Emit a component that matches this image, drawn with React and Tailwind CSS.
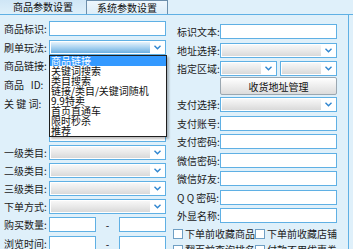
import React from "react";

const font = { fontFamily: '"Noto Sans CJK SC", "Noto Sans", sans-serif' };

function Chevron() {
  return (
    <svg width="7" height="5" viewBox="0 0 7 5" className="block">
      <path d="M0.5 0.8 L3.5 3.8 L6.5 0.8" fill="none" stroke="#2f86d0" strokeWidth="1.4" />
    </svg>
  );
}

function Input({ className = "" }) {
  return <div className={"h-[15px] border border-[#5fb0e4] bg-white " + className} />;
}

function Select({ className = "", active = false }) {
  return (
    <div className={"flex h-[15px] border border-[#5fb0e4] bg-white p-[1px] " + className}>
      <div
        className={
          "flex-1 " +
          (active
            ? "bg-gradient-to-b from-[#e6f3fc] via-[#a9d2f0] to-[#6cb0e2]"
            : "bg-gradient-to-b from-[#f7f7f7] via-[#e9e9e9] to-[#d9d9d9]")
        }
      />
      <div className="flex w-[14px] flex-none items-center justify-center">
        <Chevron />
      </div>
    </div>
  );
}

function Row({ label, mt, w = "w-[45px]", children }) {
  return (
    <div className={"flex items-center " + mt}>
      <span className={"flex-none whitespace-pre text-[10px] leading-[15px] text-[#1a1a1a] " + w}>{label}</span>
      {children}
    </div>
  );
}

function Check({ label }) {
  return (
    <div className="flex w-[88px] items-center">
      <div className="h-[10px] w-[10px] flex-none border border-[#6f9fc4] bg-white" />
      <span className="ml-[2px] whitespace-nowrap text-[10px] leading-[12px] text-[#1a1a1a]">{label}</span>
    </div>
  );
}

const options = ["商品链接", "关键词搜索", "类目搜索", "链接/类目/关键词随机", "9.9特卖", "首页直通车", "限时秒杀", "推荐"];

export default function App() {
  return (
    <div className="relative h-[249px] w-[353px] overflow-hidden bg-[#dff0fa]" style={font}>
      {/* Tabs */}
      <div className="flex h-[14px]">
        <div className="flex w-[86px] items-center justify-center bg-gradient-to-b from-[#cfe6f6] to-[#def0fa] text-[10px] leading-[14px] text-[#111]">
          商品参数设置
        </div>
        <div className="flex w-[82px] items-center justify-center border-x border-t border-[#6d8fab] bg-gradient-to-b from-[#eef7fd] to-[#dcedf8] text-[10px] leading-[13px] text-[#111]">
          系统参数设置
        </div>
        <div className="flex-1" />
      </div>

      {/* Panel */}
      <div className="flex h-[235px] border-t border-[#5fb0e4]">
        <div className="h-full w-[349px] flex-none border-r border-[#5fb0e4]">
          <div className="flex">
            {/* Left column */}
            <div className="ml-[4px] flex w-[162px] flex-col pt-[6px]">
              <Row label="商品标识:" mt="mt-0"><Input className="flex-1" /></Row>
              <Row label="刷单玩法:" mt="mt-[4px]"><Select active className="flex-1" /></Row>
              <Row label="商品链接:" mt="mt-[3px]"><Input className="flex-1" /></Row>
              <Row label="商品   ID:" mt="mt-[4px]"><Input className="flex-1" /></Row>
              <div className="mt-[3px] flex items-start">
                <span className="w-[45px] flex-none whitespace-pre pt-[1px] text-[10px] leading-[15px] text-[#1a1a1a]">关 键 词:</span>
                <div className="h-[47px] flex-1 border border-[#5fb0e4] bg-white" />
              </div>
              <Row label="一级类目:" mt="mt-[3px]"><Select className="flex-1" /></Row>
              <Row label="二级类目:" mt="mt-[3px]"><Select className="flex-1" /></Row>
              <Row label="三级类目:" mt="mt-[3px]"><Select className="flex-1" /></Row>
              <Row label="下单方式:" mt="mt-[3px]"><Select className="flex-1" /></Row>
              <Row label="购买数量:" mt="mt-[3px]">
                <Input className="w-[47px]" />
                <span className="w-[23px] text-center text-[10px] leading-[15px]">-</span>
                <Input className="w-[47px]" />
              </Row>
              <Row label="浏览时间:" mt="mt-[4px]">
                <Input className="w-[47px]" />
                <span className="w-[23px] text-center text-[10px] leading-[15px]">-</span>
                <Input className="w-[47px]" />
              </Row>
            </div>

            {/* Right column */}
            <div className="ml-[11px] flex w-[160px] flex-col pt-[9px]">
              <Row label="标识文本:" w="w-[43px]" mt="mt-0"><Input className="flex-1" /></Row>
              <Row label="地址选择:" w="w-[43px]" mt="mt-[4px]"><Select className="flex-1" /></Row>
              <Row label="指定区域:" w="w-[43px]" mt="mt-[3px]">
                <Select className="w-[57px]" />
                <div className="w-[3px]" />
                <Select className="w-[57px]" />
              </Row>
              <div className="mt-[1px] flex">
                <div className="w-[43px] flex-none" />
                <div className="flex h-[18px] flex-1 items-center justify-center rounded-[2px] border border-[#9aa7b1] bg-gradient-to-b from-[#ffffff] to-[#dcdcdc] text-[10px] text-[#111]">
                  收货地址管理
                </div>
              </div>
              <Row label="支付选择:" w="w-[43px]" mt="mt-[2px]"><Select className="flex-1" /></Row>
              <Row label="支付账号:" w="w-[43px]" mt="mt-[4px]"><Input className="flex-1" /></Row>
              <Row label="支付密码:" w="w-[43px]" mt="mt-[3px]"><Input className="flex-1" /></Row>
              <Row label="微信密码:" w="w-[43px]" mt="mt-[4px]"><Input className="flex-1" /></Row>
              <Row label="微信好友:" w="w-[43px]" mt="mt-[3px]"><Input className="flex-1" /></Row>
              <Row label="Q Q 密码:" w="w-[43px]" mt="mt-[4px]"><Input className="flex-1" /></Row>
              <Row label="外显名称:" w="w-[43px]" mt="mt-[3px]"><Input className="flex-1" /></Row>
              <div className="mt-[5px] -ml-[4px] flex">
                <Check label="下单前收藏商品" />
                <Check label="下单前收藏店铺" />
              </div>
              <div className="mt-[4px] -ml-[4px] flex">
                <Check label="翻页前查询排名" />
                <Check label="付款不用优惠券" />
              </div>
            </div>
          </div>
        </div>
      </div>

      {/* Open dropdown list */}
      <div className="absolute left-[49px] top-[55px] w-[118px] border border-[#1f1f1f] bg-white shadow-[2px_2px_2px_rgba(0,0,0,0.25)]">
        {options.map((o, i) => (
          <div
            key={o}
            className={
              "h-[10px] whitespace-nowrap pl-[1px] text-[10px] leading-[10px] " +
              (i === 0 ? "bg-[#3399ff] text-white" : "text-[#111]")
            }
          >
            {o}
          </div>
        ))}
      </div>
    </div>
  );
}
